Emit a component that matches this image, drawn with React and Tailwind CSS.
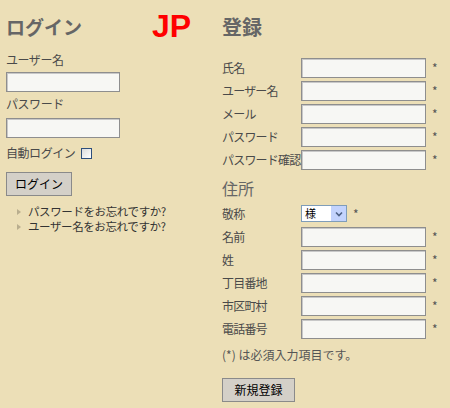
import React from "react";

const font = { fontFamily: '"Noto Sans CJK JP", "Liberation Sans", sans-serif' };

function TextBox({ w = "w-[125px]" }) {
  return (
    <input
      type="text"
      className={`block ${w} h-[20px] border border-[#8e8e8e] bg-[#f7f7f4] shadow-[inset_1px_1px_0_#c8c8c8] outline-none`}
    />
  );
}

function Row({ label, children }) {
  return (
    <div className="flex items-center h-[20px] mb-[3px]">
      <span className="relative z-10 w-[79px] whitespace-nowrap text-[12px] tracking-[-0.8px] text-[#4a4a4a] leading-none">{label}</span>
      {children}
    </div>
  );
}

function Required() {
  return <span className="ml-[6px] text-[12px] text-[#555] leading-none">*</span>;
}

export default function App() {
  const account = ["氏名", "ユーザー名", "メール", "パスワード", "パスワード確認"];
  const address = ["名前", "姓", "丁目番地", "市区町村", "電話番号"];

  return (
    <div className="w-[450px] h-[408px] bg-[#ecdfb7] flex overflow-hidden" style={font}>
      {/* ログイン */}
      <div className="w-[216px] pl-[6px] pt-[12px]">
        <div className="flex items-center h-[28px]">
          <h1 className="w-[146px] text-[19px] font-bold text-[#666] leading-none">ログイン</h1>
          <span className="text-[32px] font-bold text-[#ff0000] leading-none" style={{ fontFamily: '"Liberation Sans", sans-serif' }}>
            JP
          </span>
        </div>
        <div className="mt-[14px] text-[12px] tracking-[-0.45px] text-[#4a4a4a] leading-none">ユーザー名</div>
        <div className="mt-[6px]">
          <TextBox w="w-[114px]" />
        </div>
        <div className="mt-[6px] text-[12px] tracking-[-0.45px] text-[#4a4a4a] leading-none">パスワード</div>
        <div className="mt-[8px]">
          <TextBox w="w-[114px]" />
        </div>
        <div className="mt-[9px] flex items-center h-[12px]">
          <span className="text-[12px] tracking-[-0.45px] text-[#4a4a4a] leading-none">自動ログイン</span>
          <span className="ml-[6px] w-[11px] h-[11px] border border-[#2e4f7c] bg-gradient-to-br from-[#dcdcdc] to-[#ffffff]" />
        </div>
        <button className="mt-[13px] w-[66px] h-[24px] bg-[#d4d0c8] border border-[#8a8a8a] text-[12px] text-black leading-none">
          ログイン
        </button>
        <ul className="mt-[8px] pl-[11px]">
          {["パスワードをお忘れですか?", "ユーザー名をお忘れですか?"].map((t) => (
            <li key={t} className="flex items-center h-[15px] text-[11.5px] tracking-[-0.4px] text-[#333] leading-[15px]">
              <span className="w-0 h-0 border-y-[3px] border-y-transparent border-l-[4px] border-l-[#b9ae8e] mr-[7px]" />
              {t}
            </li>
          ))}
        </ul>
      </div>

      {/* 登録 */}
      <div className="pl-[6px] pt-[17px]">
        <h2 className="text-[20px] font-bold text-[#666] leading-none h-[21px]">登録</h2>
        <div className="mt-[20px]">
          {account.map((l) => (
            <Row key={l} label={l}>
              <TextBox />
              <Required />
            </Row>
          ))}
        </div>
        <h3 className="mt-[10px] text-[16px] text-[#666] leading-none h-[16px]">住所</h3>
        <div className="mt-[9px]">
          <div className="flex items-center h-[17px] mb-[5px]">
            <span className="w-[79px] text-[12px] tracking-[-0.8px] text-[#4a4a4a] leading-none">敬称</span>
            <div className="w-[46px] h-[17px] flex items-center border border-[#7f9db9] bg-white">
              <span className="flex-1 pl-[3px] text-[11px] text-black leading-none">様</span>
              <span className="w-[15px] h-[15px] bg-[#c3d3fd] flex items-center justify-center">
                <svg width="8" height="6" viewBox="0 0 8 6">
                  <path d="M1 1.5 L4 4.5 L7 1.5" fill="none" stroke="#4d6185" strokeWidth="1.6" />
                </svg>
              </span>
            </div>
            <Required />
          </div>
          {address.map((l) => (
            <Row key={l} label={l}>
              <TextBox />
              <Required />
            </Row>
          ))}
        </div>
        <p className="mt-[10px] text-[12px] text-[#555] leading-none">(*) は必須入力項目です。</p>
        <button className="mt-[17px] w-[73px] h-[24px] bg-[#d4d0c8] border border-[#8a8a8a] text-[12px] text-black leading-none">
          新規登録
        </button>
      </div>
    </div>
  );
}
